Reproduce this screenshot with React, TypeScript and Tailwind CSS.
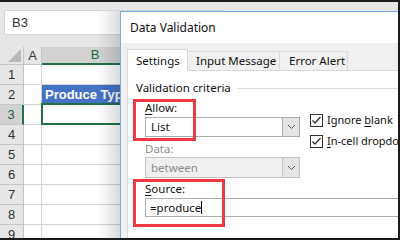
import React from "react";

const excelFont = { fontFamily: '"Liberation Sans", Arial, sans-serif' };
const uiFont = { fontFamily: '"Noto Sans", "Open Sans", sans-serif' };

function Chevron() {
  return (
    <svg width="9" height="6" viewBox="0 0 9 6">
      <path d="M1 1 L4.5 4.5 L8 1" fill="none" stroke="#5f5f5f" strokeWidth="1" />
    </svg>
  );
}

function Check() {
  return (
    <div className="w-[13px] h-[13px] shrink-0 border border-[#333] bg-white flex items-center justify-center">
      <svg width="11" height="11" viewBox="0 0 11 11">
        <path d="M1.5 5.5 L4 8 L9.5 2" fill="none" stroke="#333" strokeWidth="1.3" />
      </svg>
    </div>
  );
}

const rows = [1, 2, 3, 4, 5, 6, 7, 8, 9];

export default function App() {
  return (
    <div className="relative w-[400px] h-[240px] overflow-hidden bg-[#e6e6e6]" style={excelFont}>
      {/* Excel sheet */}
      <div className="flex flex-col">
        {/* Name box / formula bar */}
        <div className="h-[47px] pt-[10px] pl-[4px]">
          <div className="h-[25px] w-[220px] bg-white border border-[#d4d4d4] pl-[7px] flex items-center text-[13px] text-[#333]">
            B3
          </div>
        </div>

        {/* Column headers */}
        <div className="h-[18px] flex text-[13px] text-[#333]">
          <div className="w-[24px] border-r border-b border-[#c6c6c6] flex items-end justify-end pr-[2px] pb-[2px]">
            <div className="w-0 h-0 border-l-[13px] border-l-transparent border-b-[13px] border-b-[#b7b7b7]" />
          </div>
          <div className="w-[18px] border-r border-b border-[#c6c6c6] flex items-center justify-center">A</div>
          <div className="w-[106px] bg-[#d2d2d2] border-b-2 border-[#217346] flex items-center justify-center text-[#1e6b3f]">
            B
          </div>
          <div className="flex-1 border-b border-[#c6c6c6]" />
        </div>

        {/* Rows */}
        {rows.map((r) => (
          <div key={r} className="h-[20px] flex">
            <div
              className={
                r === 3
                  ? "w-[24px] bg-[#d2d2d2] border-r-2 border-r-[#217346] border-b border-b-[#c6c6c6] text-[13px] text-[#1e5b38] flex items-center justify-center"
                  : "w-[24px] border-r border-b border-[#c6c6c6] text-[13px] text-[#333] flex items-center justify-center"
              }
            >
              {r}
            </div>
            <div className="w-[18px] bg-white border-r border-b border-[#d4d4d4]" />
            <div
              className={
                r === 2
                  ? "w-[106px] bg-[#4472c4] border-b border-[#d4d4d4] flex items-center pl-[3px] text-[13px] font-bold text-white whitespace-nowrap"
                  : "relative w-[106px] bg-white border-r border-b border-[#d4d4d4]"
              }
            >
              {r === 2 && "Produce Type"}
              {r === 3 && <div className="absolute -top-[2px] -left-px -right-px -bottom-px border-2 border-[#217346]" />}
            </div>
            <div className="flex-1 bg-white border-b border-[#d4d4d4]" />
          </div>
        ))}
      </div>

      {/* Dialog shadow */}
      <div className="absolute left-[98px] top-[11px] w-[22px] h-[240px] bg-gradient-to-r from-transparent to-[rgba(0,0,0,0.14)]" />

      {/* Data Validation dialog */}
      <div className="absolute left-[120px] top-[11px] w-[300px] h-[250px] border border-[#7aaee6] bg-[#f0f0f0] flex flex-col text-[11.5px] text-[#111] whitespace-nowrap" style={uiFont}>
        <div className="h-[31px] bg-white pl-[9px] flex items-center text-[12px]">Data Validation</div>
        <div className="flex-1 pl-[6px] pt-[6px] flex flex-col">
          {/* Tabs */}
          <div className="h-[21px] flex items-end">
            <div className="relative z-10 -mb-px w-[61px] h-[22px] bg-white border border-b-0 border-[#d9d9d9] pl-[8px] flex items-center">
              Settings
            </div>
            <div className="w-[93px] -ml-px h-[19px] border border-b-0 border-[#d9d9d9] pl-[8px] flex items-center">
              Input Message
            </div>
            <div className="w-[69px] -ml-px h-[19px] border border-b-0 border-[#d9d9d9] pl-[9px] flex items-center">
              Error Alert
            </div>
          </div>

          {/* Tab panel */}
          <div className="flex-1 bg-white border border-[#d9d9d9] pl-[8px] pt-[9px]">
            <div className="h-[16px] flex items-center gap-[6px]">
              <span>Validation criteria</span>
              <div className="flex-1 h-px bg-[#dcdcdc]" />
            </div>

            <div className="pl-[9px]">
              <div className="flex gap-[10px]">
                <div className="w-[155px] shrink-0 flex flex-col">
                  <div className="mt-[4px] h-[16px] flex items-center">
                    <span><u className="underline-offset-2">A</u>llow:</span>
                  </div>
                  <div className="mt-px h-[20px] flex border border-[#adadad] bg-white">
                    <div className="flex-1 pl-[5px] flex items-center">List</div>
                    <div className="w-[17px] bg-[#e5e5e5] border-l border-[#adadad] flex items-center justify-center">
                      <Chevron />
                    </div>
                  </div>
                  <div className="mt-[4px] h-[16px] flex items-center text-[#8d8d8d]">Data:</div>
                  <div className="h-[21px] flex border border-[#c4c4c4] bg-[#efefef] text-[#8d8d8d]">
                    <div className="flex-1 pl-[5px] flex items-center">between</div>
                    <div className="w-[17px] bg-[#e5e5e5] border-l border-[#c4c4c4] flex items-center justify-center">
                      <Chevron />
                    </div>
                  </div>
                </div>
                <div className="mt-[18px] flex flex-col gap-[8px] text-[11px]">
                  <div className="flex items-center gap-[4px] h-[13px]">
                    <Check />
                    <span>Ignore <u className="underline-offset-2">b</u>lank</span>
                  </div>
                  <div className="flex items-center gap-[4px] h-[13px]">
                    <Check />
                    <span><u className="underline-offset-2">I</u>n-cell dropdown</span>
                  </div>
                </div>
              </div>

              <div className="mt-[3px] h-[16px] flex items-center">
                <span><u className="underline-offset-2">S</u>ource:</span>
              </div>
              <div className="mt-px h-[19px] w-[254px] border border-[#adadad] bg-white pl-[4px] flex items-center">
                <span>=produce</span>
                <span className="w-px h-[13px] bg-black" />
              </div>
            </div>
          </div>
        </div>
      </div>

      {/* Red annotation boxes */}
      <div className="absolute left-[133px] top-[99px] w-[63px] h-[42px] border-[3px] border-[#ee3b43]" />
      <div className="absolute left-[133px] top-[179px] w-[92px] h-[48px] border-[3px] border-[#ee3b43]" />

      {/* Screenshot frame */}
      <div className="pointer-events-none absolute inset-0 border-t-2 border-r-2 border-b-2 border-[#1b1b1b]" />
    </div>
  );
}
